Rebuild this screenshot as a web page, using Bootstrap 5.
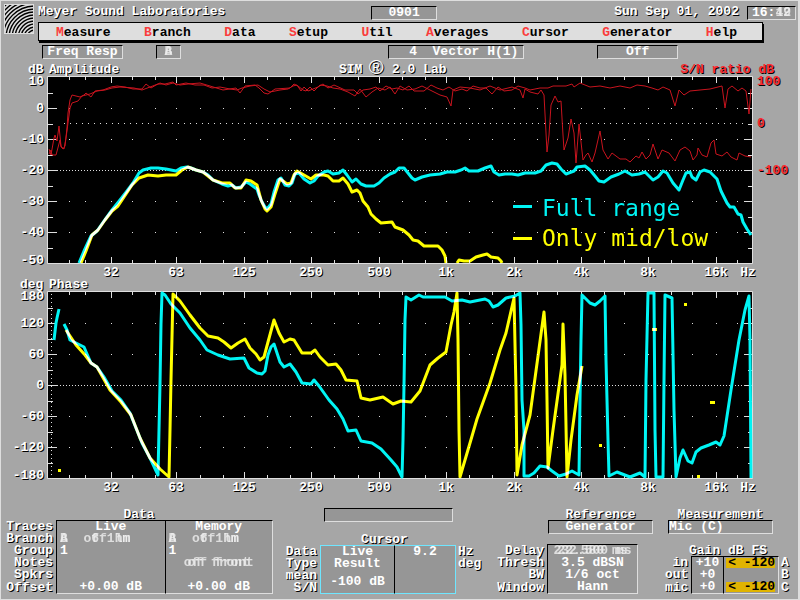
<!DOCTYPE html>
<html lang="en">
<head>
<meta charset="utf-8">
<meta name="viewport" content="width=device-width, initial-scale=1">
<title>Meyer Sound Laboratories – SIM 2.0 Lab</title>
<link href="https://cdn.jsdelivr.net/npm/bootstrap@5.3.0/dist/css/bootstrap.min.css" rel="stylesheet">
<style>
  body {
    background: #a6a6a6; color: #fff;
    font: bold 13px/12px "Liberation Mono", monospace;
    box-shadow: inset 1px 1px 0 #dedede, inset -2px -1px 0 #dedede;
  }
  .etched, .readings th, .readings caption, .readings .unit { text-shadow: 1px 1px 0 #000; }
  .logo { width: 30px; height: 30px; margin: 4px 4px 0 4px; }
  .title-row { height: 22px; padding: 6px 4px 0 0; display: grid; grid-template-columns: 331fr 65fr 176fr auto auto; }
  .sunken {
    background: #969696; border: 1px solid; border-color: #000 #dedede #dedede #000;
    height: 14px; line-height: 12px; white-space: pre; text-align: center;
  }
  .menu-bar {
    background: #dedede; border: 1px solid #000; box-shadow: 1px 2px 0 #000;
    margin-right: 37px; padding: 0 25px 0 17px; height: 19px;
  }
  .menu-bar a { display: block; color: #000; text-decoration: none; line-height: 19px; }
  .menu-bar a::first-letter { color: #fa3c3c; }
  .mode-row { display: grid; grid-template-columns: 81fr 33fr 25fr 207fr 137fr 73fr 81fr 122fr; padding: 4px 0 0 42px; }
  .chart { display: block; width: 100%; height: auto; overflow: visible; }
  .chart text { fill: #fff; text-shadow: 1px 1px 0 #000; }
  .chart .red { fill: #fa2c34; }
  .chart .end { text-anchor: end; }
  .chart .mid { text-anchor: middle; }
  .chart .reg { font: 20px "Liberation Sans", sans-serif; }
  .chart .key { font: 23px "DejaVu Sans Mono", monospace; text-shadow: none; }
  .chart .cy { fill: #00f4f4; } .chart .ye { fill: #ffff00; }
  .chart polyline, .chart path { fill: none; stroke-linejoin: round; }
  .sn { stroke: #c8141e; stroke-width: 1; }
  .full { stroke: #00f4f4; stroke-width: 3; }
  .low { stroke: #ffff00; stroke-width: 3; mix-blend-mode: screen; }
  .axis { stroke: #dedede; stroke-width: 1; }
  .plot { isolation: isolate; }
  .footer-grid { display: grid; grid-template-columns: 268fr 199fr 157fr 126fr; column-gap: 12px; align-items: end; padding: 0 9px 6px 5px; }
  .readings { width: 100%; border-collapse: separate; border-spacing: 0; table-layout: fixed; }
  .readings caption { caption-side: top; color: #fff; padding: 0; text-align: center; line-height: 11px; }
  .readings th, .readings td { padding: 0; height: 12px; line-height: 12px; white-space: pre; }
  .readings th { text-align: right; padding-right: 3px; }
  .readings .unit { text-align: left; padding-left: 2px; }
  .readings .val { background: #969696; text-align: center; }
  .readings .first { border-left: 1px solid #000; }
  .readings .last { border-right: 1px solid #dedede; }
  .readings .split { border-left: 1px solid #000; }
  .readings tr:first-child .val { border-top: 1px solid #000; }
  .readings tr:last-child .val { border-bottom: 1px solid #dedede; }
  .readings .val.start { text-align: left; padding-left: 3px; }
  .readings.cursor-set tbody tr .val { border-color: #6ee6ff; }
  .readings.cursor-set tbody tr .val.split { border-left-color: #000; }
  .readings.cursor-set tbody tr .val.floor { border-bottom: 1px solid #6ee6ff; }
  .alarm { background: #e0b400; color: #000; display: block; line-height: 10px; margin: 1px 3px 1px 2px; text-align: right; }
  .w-label { width: 51px; } .w-unit { width: 28px; } .w-gain { width: 32px; } .w-short { width: 26px; }
  .w-tail { width: 12px; } .w-cursor { width: 35px; } .w-live { width: 74px; } .w-spare { width: 15px; }
  .blend { display: inline-grid; justify-items: center; color: #f0f0f0; }
  .blend > span { grid-area: 1 / 1; opacity: .8; }
  .message { margin: 0 31px 12px 39px; }
  .side-head { line-height: 11px; text-align: center; }
  .ref-head { margin-left: 52px; }
  .ref-set { margin-top: 10px; }
  .meas-head { margin: 0 18px 0 3px; }
  .gain-set { margin-top: 11px; }
</style>
<script src="https://cdn.jsdelivr.net/npm/bootstrap@5.3.0/dist/js/bootstrap.bundle.min.js"></script>
</head>
<body class="min-vh-100 d-flex flex-column">

<header class="d-flex">
  <svg class="logo flex-shrink-0" viewBox="0 0 30 30" aria-label="Meyer Sound logo">
    <rect width="30" height="30" fill="#dedede"/>
    <g id="rings" fill="none" stroke="#000" stroke-width="1.4"></g>
    <rect x=".5" y=".5" width="29" height="29" fill="none" stroke="#dedede"/>
  </svg>
  <div class="flex-grow-1">
    <div class="title-row">
      <span class="etched">Meyer Sound Laboratories</span>
      <div class="sunken">0901</div>
      <span></span>
      <span class="etched pe-2">Sun Sep 01, 2002</span>
      <div class="sunken px-1">16:<span class="blend"><span>42</span><span>19</span></span></div>
    </div>
    <nav class="menu-bar d-flex justify-content-between">
      <a href="#">Measure</a><a href="#">Branch</a><a href="#">Data</a><a href="#">Setup</a><a href="#">Util</a><a href="#">Averages</a><a href="#">Cursor</a><a href="#">Generator</a><a href="#">Help</a>
    </nav>
  </div>
</header>

<div class="mode-row">
  <div class="sunken">Freq Resp</div><span></span>
  <div class="sunken"><span class="blend"><span>A</span><span>B</span></span></div><span></span>
  <div class="sunken">  4  Vector H(1)</div><span></span>
  <div class="sunken">Off</div>
</div>

<main class="flex-grow-1">
  <svg class="chart" viewBox="0 59 800 218" role="img" aria-label="Amplitude and S/N ratio">
    <text x="28" y="73">dB</text><text x="49" y="73">Amplitude</text>
    <text x="339" y="73">SIM</text><text class="mid reg" x="376" y="74">®</text><text x="392" y="73">2.0 Lab</text>
    <text class="red end" x="774" y="73">S/N ratio dB</text>
    <g class="plot">
      <rect x="48" y="77" width="704" height="186"/>
      <g class="axis" data-top="77"></g>
      <path class="axis" d="M64 123.5H744" stroke-dasharray="1 5"/>
      <polyline class="sn" points="49,149 51,155 54,138 55,135 57,141 59,126 61,146 63,149 65,146 67,128 68,113 70,100 72,95 80,97 84,95 86,93 91,97 95,91 103,90 111,87 117,86 125,87 133,89 142,89 146,84 151,88 156,85 160,83 166,85 173,83 180,85 188,84 200,83 210,86 223,90 236,88 240,93 245,86 255,85 259,88 264,93 268,94 275,89 290,88 294,84 298,86 303,90 306,91 310,87 314,91 320,85 327,86 333,88 340,89 348,92 355,96 360,89 366,97 372,92 378,88 385,90 390,87 395,94 400,86 407,90 415,89 422,86 430,90 436,93 440,95 447,97 451,106 453,90 460,87 470,88 480,90 490,86 500,90 512,87 520,90 523,98 525,89 530,92 538,94 541,90 544,95 547,152 549,135 551,105 555,96 558,102 561,101 563,135 564,150 568,138 571,119 574,133 576,163 579,124 583,160 586,155 588,153 592,162 595,153 600,131 603,150 608,159 612,153 620,159 626,159 630,162 636,156 639,158 642,152 646,159 650,155 653,144 658,159 662,150 669,153 675,161 680,150 685,147 690,151 693,160 697,155 698,148 702,155 707,157 711,143 714,140 716,154 722,156 727,152 731,157 737,160 739,153 745,156 751,157"/>
      <polyline class="sn" points="49,154 51,150 52,155 56,155 60,140 61,147 64,149 66,138 70,108 72,103 78,101 82,96 90,94 97,91 105,90 112,88 120,87 134,88 142,90 150,87 158,84 165,84 173,82 176,85 186,83 195,85 204,85 212,88 220,87 230,89 237,90 242,88 250,86 258,85 264,89 270,92 280,90 288,89 293,86 297,85 301,91 304,87 308,91 313,89 318,87 323,84 328,88 334,85 345,90 354,90 358,94 363,90 370,89 376,87 380,91 386,86 392,89 397,88 403,90 409,86 414,91 424,91 431,85 437,88 443,90 449,87 455,91 462,89 467,91 473,86 480,88 486,88 492,94 498,87 504,91 512,90 518,86 525,88 530,90 540,88 548,88 553,86 560,86 566,86 572,84 574,87 580,83 590,87 600,86 610,88 620,86 630,88 637,85 645,86 652,88 658,90 663,87 670,90 675,106 679,90 684,95 690,91 700,90 710,89 722,86 725,108 728,89 732,86 738,91 742,88 746,91 749,114 751,89"/>
      <polyline class="full" points="79,263 84,251 91,236 97,231 104,221 112,210 120,200 127,191 133,183 139,173 143,170 151,168 158,168 166,169 176,171 181,168 187,167 191,168 196,170 203,172 208,175 213,180 222,184 228,186 232,185 236,188 241,187 246,182 250,184 257,189 259,195 262,202 265,207 267,209 271,204 274,192 278,180 281,178 285,185 289,186 292,183 295,174 299,173 304,179 310,183 314,181 318,176 324,172 328,171 333,174 339,173 343,170 347,175 352,182 356,179 361,184 366,186 374,186 379,183 384,178 390,174 395,172 399,168 404,168 408,173 412,178 415,180 422,177 430,175 440,174 447,172 455,172 461,170 465,168 469,171 478,171 485,168 491,166 494,172 499,175 505,174 512,174 518,175 525,173 535,173 541,171 546,165 552,163 557,164 561,169 566,174 574,171 577,167 585,166 590,170 595,176 599,181 604,182 611,177 619,174 625,171 632,175 639,174 645,172 649,176 653,180 658,177 663,171 667,173 673,183 679,190 683,180 686,173 690,172 692,177 696,180 700,172 704,170 710,172 717,179 721,191 727,203 730,207 734,207 738,214 741,215 743,222 747,229 751,235"/>
      <polyline class="low" points="81,263 86,251 92,235 98,230 105,220 112,211 118,206 126,194 132,185 139,178 148,175 158,176 166,175 176,175 182,170 188,167 196,170 203,172 213,180 222,183 230,183 235,188 241,188 246,180 251,181 257,185 261,200 265,209 267,211 271,207 275,194 280,179 283,181 287,184 291,183 294,175 297,171 304,175 311,179 316,175 324,175 328,176 333,181 339,181 343,178 348,184 352,192 357,190 360,193 363,201 368,207 371,214 376,219 381,223 392,222 395,227 403,230 409,235 413,240 418,241 424,246 438,246 442,250 445,256 446,263"/>
      <polyline class="low" points="457,263 459,260 464,261 470,261 476,257 483,255 487,254 491,257 498,258 501,261 502,263"/>
      <path class="full" d="M513 206.500H532"/><path class="low" d="M513 238.500H532"/>
      <text class="key cy" x="542" y="216">Full range</text>
      <text class="key ye" x="542" y="246">Only mid/low</text>
    </g>
    <g class="end">
      <text x="44" y="85">10</text><text x="44" y="112">0</text><text x="44" y="143">-10</text><text x="44" y="174">-20</text><text x="44" y="205">-30</text><text x="44" y="236">-40</text><text x="44" y="264">-50</text>
    </g>
    <text class="red" x="757" y="85">100</text><text class="red" x="757" y="127">0</text><text class="red" x="757" y="174">-100</text>
    <g class="mid" data-freq="276"></g>
  </svg>

  <svg class="chart" viewBox="0 277 800 216" role="img" aria-label="Phase">
    <text x="20" y="288">deg</text><text x="49" y="288">Phase</text>
    <g class="plot">
      <rect x="48" y="292" width="704" height="186"/>
      <g class="axis" data-top="292"></g>
      <path class="axis" d="M51.500 294V477" stroke-dasharray="1 3"/>
      <polyline class="full" points="54,340 56,323 57,318 59,309"/>
      <polyline class="full" points="64,324 67,330 70,340 76,343 84,347 87,354 91,363 97,367 104,377 112,391 121,400 130,413 136,428 142,443 150,458 158,475 159,430 160,384 161,324 162,293 165,295 171,304 180,313 190,328 200,340 207,350 218,355 230,359 244,358 249,368 257,373 262,374 265,371 268,355 271,347 274,344 277,353 280,362 284,367 290,364 296,372 302,383 311,384 314,380 319,386 329,400 337,409 343,419 348,431 356,430 361,441 372,443 381,449 391,460 397,467 402,477 403,440 404,385 405,320 406,297 411,300 419,295 423,297 445,297 452,301 462,300 470,302 485,299 489,301 493,307 498,305 506,298 515,296 520,293 521,325 522,400 524,430 524,476 529,476 534,473 540,466 547,467 552,471 559,476 566,474 572,471 579,475 580,400 581,340 582,295 590,303 595,305 600,301 605,296 606,360 608,440 609,476 617,472 630,477 640,473 645,477 646,380 648,293 654,293 655,430 656,477 663,477 664,380 665,295 672,298 674,410 676,477 680,458 683,450 688,461 692,463 696,452 701,448 709,445 716,442 720,445 724,436 731,390 739,340 745,310 749,296 750,340 751,478"/>
      <polyline class="low" points="66,330 76,345 85,355 91,363 97,367 110,390 121,402 131,415 140,438 150,458 160,469 169,477 170,430 171,380 173,294 180,301 190,315 200,328 208,336 218,338 224,342 231,348 238,343 245,339 250,348 256,354 260,360 264,357 268,342 274,320 279,333 284,342 290,339 294,340 302,353 311,353 315,350 320,357 328,365 336,364 341,370 346,380 357,381 361,398 370,400 383,397 393,404 401,401 411,402 420,391 430,365 438,358 446,352 451,325 454,312 457,293 458,340 459,430 460,477 470,443 477,419 490,383 500,350 506,333 514,298 516,390 517,475 522,445 530,415 544,312 546,340 547,400 548,468 553,430 562,365 563,324 565,375 567,477 571,440 577,395 582,366"/>
      <path class="low" d="M58 470.500h3M684 304.500h3M652 329.500h5M710 402.500h5M599 445.500h3M697 476.500h3"/>
    </g>
    <g class="end">
      <text x="44" y="300">180</text><text x="44" y="327">120</text><text x="44" y="358">60</text><text x="44" y="389">0</text><text x="44" y="420">-60</text><text x="44" y="451">-120</text><text x="44" y="479">-180</text>
    </g>
    <g class="mid" data-freq="491"></g>
  </svg>
</main>

<footer class="footer-grid">
  <table class="readings">
    <caption>Data</caption>
    <colgroup><col class="w-label"><col><col></colgroup>
    <tbody>
    <tr><th scope="row">Traces</th><td class="val first">Live</td><td class="val split last">Memory</td></tr>
    <tr><th scope="row">Branch</th><td class="val first start"><span class="blend"><span>A</span><span>B</span></span>  <span class="blend"><span>off1hm</span><span> 6  lm</span></span></td><td class="val split last start"><span class="blend"><span>A</span><span>B</span></span>  <span class="blend"><span>off1hm</span><span> 6  lm</span></span></td></tr>
    <tr><th scope="row">Group</th><td class="val first start">1</td><td class="val split last start">1</td></tr>
    <tr><th scope="row">Notes</th><td class="val first"></td><td class="val split last"><span class="blend"><span>off front</span><span>of front</span></span></td></tr>
    <tr><th scope="row">Spkrs</th><td class="val first"></td><td class="val split last"></td></tr>
    <tr><th scope="row">Offset</th><td class="val first">+0.00 dB</td><td class="val split last">+0.00 dB</td></tr>
    </tbody>
  </table>

  <div>
    <div class="sunken message"></div>
    <table class="readings cursor-set">
      <caption>Cursor</caption>
      <colgroup><col class="w-cursor"><col class="w-live"><col><col class="w-unit"></colgroup>
      <tbody>
      <tr><th scope="row">Data</th><td class="val first">Live</td><td class="val split last">9.2</td><td class="unit">Hz</td></tr>
      <tr><th scope="row">Type</th><td class="val first">Result</td><td class="val split last"></td><td class="unit">deg</td></tr>
      <tr><th scope="row">mean</th><td class="val first floor" rowspan="2">-100 dB</td><td class="val split last floor" rowspan="2"></td><td></td></tr>
      <tr><th scope="row">S/N</th><td></td></tr>
      </tbody>
    </table>
  </div>

  <div>
    <div class="side-head etched ref-head">Reference</div>
    <div class="sunken ref-head">Generator</div>
    <table class="readings ref-set">
      <colgroup><col class="w-label"><col><col class="w-spare"></colgroup>
      <tbody>
      <tr><th scope="row">Delay</th><td class="val first last"><span class="blend"><span>232.500 ms</span><span>22.580 ms</span></span></td><td></td></tr>
      <tr><th scope="row">Thresh</th><td class="val first last">3.5 dBSN</td><td></td></tr>
      <tr><th scope="row">BW</th><td class="val first last">1/6 oct</td><td></td></tr>
      <tr><th scope="row">Window</th><td class="val first last">Hann</td><td></td></tr>
      </tbody>
    </table>
  </div>

  <div>
    <div class="side-head etched meas-head">Measurement</div>
    <div class="sunken meas-head text-start">Mic (C)</div>
    <table class="readings gain-set">
      <caption>Gain dB FS</caption>
      <colgroup><col class="w-short"><col class="w-gain"><col><col class="w-tail"></colgroup>
      <tbody>
      <tr><th scope="row">in</th><td class="val first">+10</td><td class="val split last"><span class="alarm">&lt; -120</span></td><td class="unit">A</td></tr>
      <tr><th scope="row">out</th><td class="val first">+0</td><td class="val split last"></td><td class="unit">B</td></tr>
      <tr><th scope="row">mic</th><td class="val first">+0</td><td class="val split last"><span class="alarm">&lt; -120</span></td><td class="unit">C</td></tr>
      </tbody>
    </table>
  </div>
</footer>

<script>
  const bands = { 111: '32', 176: '63', 244: '125', 311: '250', 379: '500', 446: '1k', 514: '2k', 581: '4k', 648: '8k', 716: '16k' };
  const majors = Object.keys(bands).map(Number);
  const minors = [69, 85, 132, 155, 200, 223, 267, 290, 334, 358, 402, 425, 469, 492, 537, 557, 604, 624, 671, 692, 737];

  document.querySelectorAll('[data-top]').forEach(g => {
    const top = +g.dataset.top, bottom = top + 186;
    let d = '';
    [[majors, 6], [minors, 3]].forEach(([xs, len]) => xs.forEach(x => {
      d += `M${x + .5} ${top}v${len}M${x + .5} ${bottom}v-${len}`;
      [31, 62, 124, 155].forEach(y => d += `M${x} ${top + y + .5}h1`);
    }));
    [31, 62, 93, 124, 155].forEach(y => d += `M48 ${top + y + .5}h9M752 ${top + y + .5}h-8`);
    [16, 47, 78, 109, 140, 171].forEach(y => d += `M48 ${top + y + .5}h5M752 ${top + y + .5}h-4`);
    g.innerHTML = `<path d="${d}"/><path stroke-dasharray="1 2" d="M57 ${top + 93.5}H744"/>
      <path d="M47.500 ${top - .5}H752.500V${bottom + .5}H47.500Z"/>`;
  });

  document.querySelectorAll('[data-freq]').forEach(g => {
    const y = g.dataset.freq;
    g.innerHTML = majors.map(x => `<text x="${x}" y="${y}">${bands[x]}</text>`).join('') + `<text x="748" y="${y}">Hz</text>`;
  });

  let rings = '';
  for (let r = 5; r < 46; r += 3) rings += `<circle cx="31" cy="34" r="${r}"/>`;
  document.getElementById('rings').innerHTML = rings;
</script>
</body>
</html>
